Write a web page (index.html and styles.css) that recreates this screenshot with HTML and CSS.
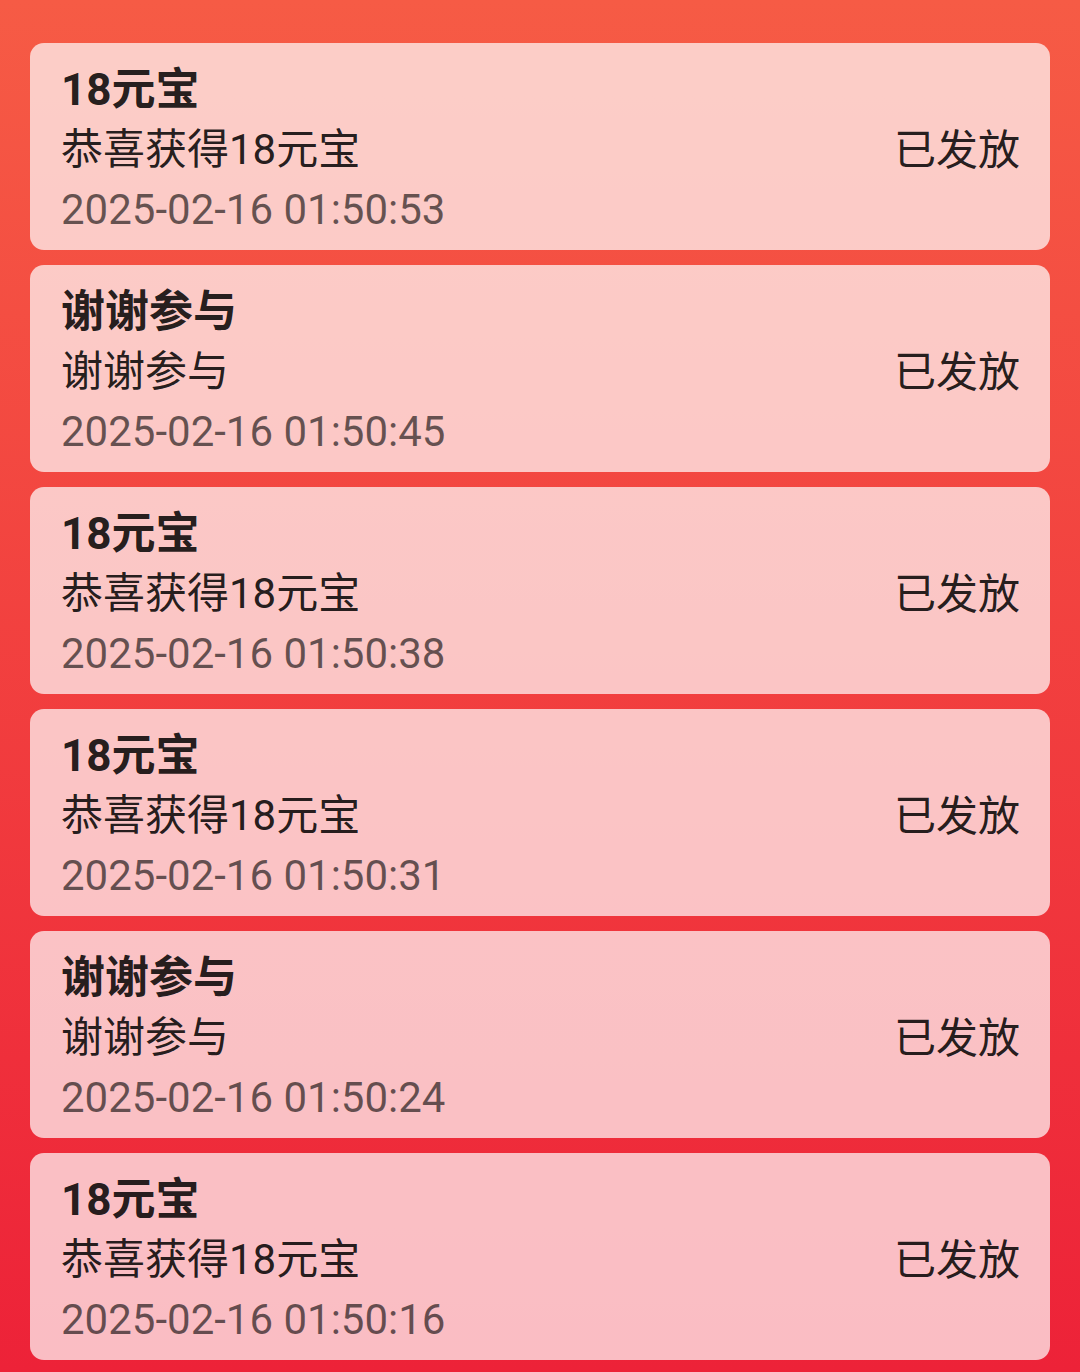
FILE: index.html
```html
<!DOCTYPE html>
<html lang="zh-CN">
<head>
  <meta charset="UTF-8">
  <meta name="viewport" content="width=device-width, initial-scale=1.0">
  <title>中奖记录</title>
  <link rel="stylesheet" href="styles.css">
</head>
<body>
  <ul id="record">
    <li class="item">
      <div class="info">
        <div class="title">18元宝</div>
        <div class="desc">恭喜获得18元宝</div>
        <div class="time">2025-02-16 01:50:53</div>
      </div>
      <span class="status">已发放</span>
    </li>
    <li class="item">
      <div class="info">
        <div class="title">谢谢参与</div>
        <div class="desc">谢谢参与</div>
        <div class="time">2025-02-16 01:50:45</div>
      </div>
      <span class="status">已发放</span>
    </li>
    <li class="item">
      <div class="info">
        <div class="title">18元宝</div>
        <div class="desc">恭喜获得18元宝</div>
        <div class="time">2025-02-16 01:50:38</div>
      </div>
      <span class="status">已发放</span>
    </li>
    <li class="item">
      <div class="info">
        <div class="title">18元宝</div>
        <div class="desc">恭喜获得18元宝</div>
        <div class="time">2025-02-16 01:50:31</div>
      </div>
      <span class="status">已发放</span>
    </li>
    <li class="item">
      <div class="info">
        <div class="title">谢谢参与</div>
        <div class="desc">谢谢参与</div>
        <div class="time">2025-02-16 01:50:24</div>
      </div>
      <span class="status">已发放</span>
    </li>
    <li class="item">
      <div class="info">
        <div class="title">18元宝</div>
        <div class="desc">恭喜获得18元宝</div>
        <div class="time">2025-02-16 01:50:16</div>
      </div>
      <span class="status">已发放</span>
    </li>
  </ul>
</body>
</html>
```

FILE: styles.css
```css
*{
  margin: 0;
  padding: 0;
}
html,
body{
  height: 100%;
}
body{
  font-family: Roboto, "Noto Sans CJK SC", sans-serif;
  background: linear-gradient(#f65b45, #ed2238);
  overflow: hidden;
}

#record{
  list-style: none;
  padding: 43px 30px 0;
  display: flex;
  flex-direction: column;
  gap: 15px;
}

#record>.item{
  height: 207px;
  box-sizing: border-box;
  padding: 0 30px 0 31px;
  display: flex;
  align-items: center;
  justify-content: space-between;
  border-radius: 14px;
  background: rgba(255,255,255,0.7);
}

.info{
  margin-top: 6px;
}
.info>div{
  height: 60px;
  line-height: 60px;
  font-size: 42px;
  white-space: nowrap;
}
.info>.title{
  font-size: 44px;
  font-weight: bold;
  color: rgba(0,0,0,0.87);
}
.info>.desc{
  color: rgba(0,0,0,0.87);
}
.info>.time{
  color: rgba(0,0,0,0.6);
}

.status{
  font-size: 42px;
  color: rgba(0,0,0,0.87);
}
```
